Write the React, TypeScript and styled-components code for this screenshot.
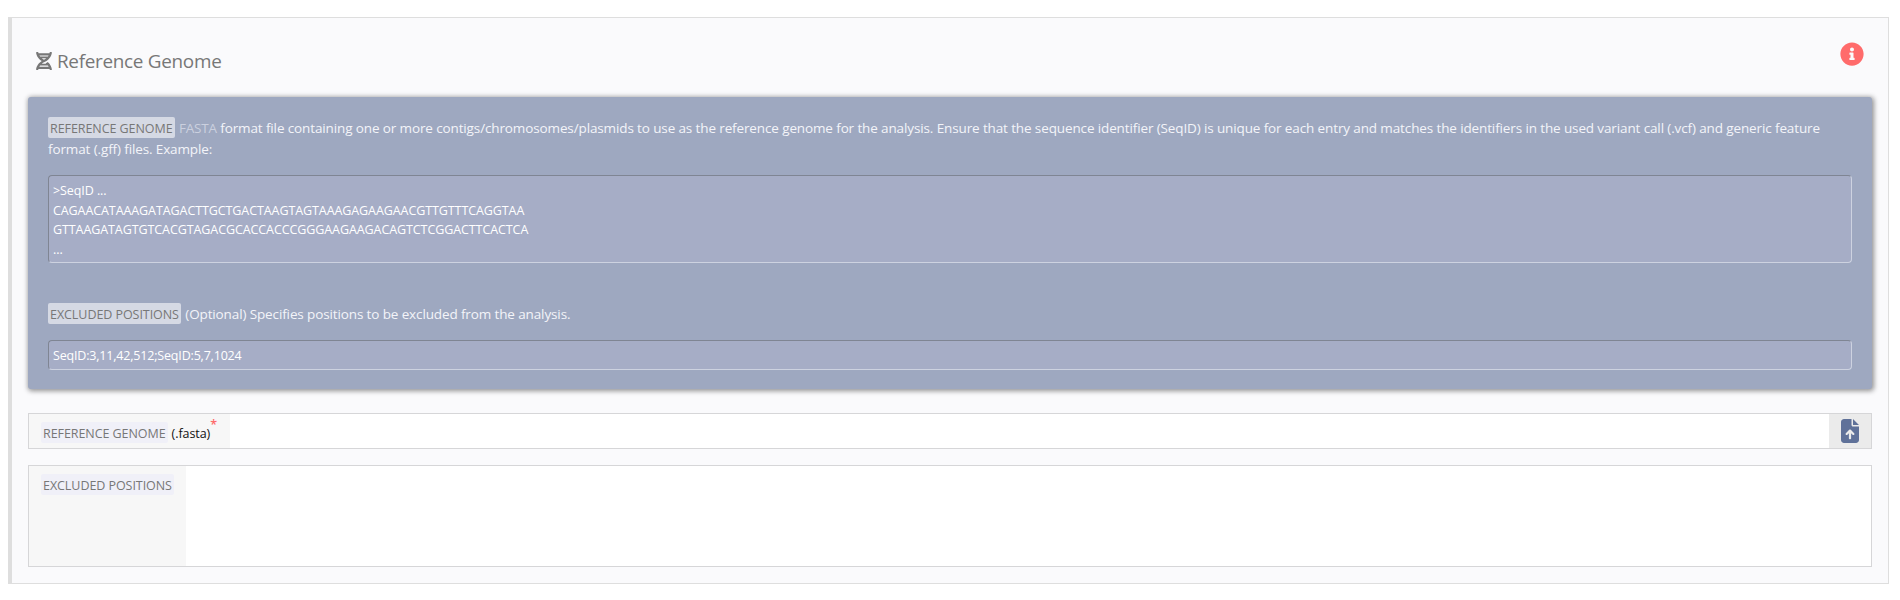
import React from 'react';
import styled, { createGlobalStyle } from 'styled-components';
import { FaDna, FaInfoCircle } from 'react-icons/fa';
import { FaFileArrowUp } from 'react-icons/fa6';

const GlobalStyle = createGlobalStyle`
  *, *::before, *::after { box-sizing: border-box; }
  body {
    margin: 0;
    background: #fff;
    font-family: 'Open Sans', 'Noto Sans', sans-serif;
  }
`;

const Card = styled.section`
  display: flex;
  flex-direction: column;
  height: 567px;
  margin: 17px 11px 0 8px;
  padding: 0 16px 16px;
  border: 1px solid #dedede;
  border-left-width: 4px;
  background: #fafafc;
`;

const Header = styled.header`
  display: flex;
  justify-content: space-between;
  height: 79px;
  padding: 24px 8px 0;
`;

const Title = styled.h1`
  display: flex;
  align-items: center;
  gap: 5px;
  height: 38px;
  margin: 0;
  font-size: 18.9px;
  font-weight: 400;
  line-height: 38px;
  letter-spacing: -0.29px;
  color: #777;
  white-space: nowrap;
`;

const DnaIcon = styled(FaDna)`
  width: 16px;
  height: 18px;
`;

const InfoButton = styled.button`
  width: 24px;
  height: 24px;
  padding: 0;
  border: 0;
  background: none;
  color: #ff6b6b;
  svg { display: block; width: 24px; height: 24px; }
`;

const HelpPanel = styled.div`
  height: 292px;
  padding: 20px;
  border-radius: 3px;
  background: #9ea8c0;
  box-shadow: 1px 1px 5px 1px rgba(0, 0, 0, 0.42);
`;

const HelpText = styled.p<{ $tall?: boolean }>`
  margin: 0;
  height: ${(p) => (p.$tall ? '58px' : '37px')};
  padding-top: 1px;
  font-size: 13.5px;
  line-height: 21px;
  letter-spacing: -0.123px;
  color: #f3f4f9;
`;

const Tag = styled.span<{ $onPanel?: boolean }>`
  display: inline-block;
  height: 21px;
  margin: ${(p) => (p.$onPanel ? '-1px 1px 0 0' : '0')};
  padding: 0 2px;
  border-radius: 2px;
  font-size: 12.5px;
  line-height: 24px;
  letter-spacing: -0.06px;
  vertical-align: top;
  white-space: nowrap;
  color: #777;
  background: ${(p) => (p.$onPanel ? '#d5d9e4' : '#f0f0f8')};
`;

const Format = styled.span`
  letter-spacing: -0.2px;
  color: #cbd0df;
`;

const Example = styled.pre<{ $spacing: number }>`
  margin: 0;
  padding: 5px 4px 3px;
  border: 1px solid;
  border-color: #7f8593 #cdd2e0 #cdd2e0 #7f8593;
  border-radius: 4px;
  background: #a6adc6;
  color: #fff;
  font-family: inherit;
  font-size: 12.5px;
  line-height: 19.5px;
  letter-spacing: ${(p) => p.$spacing}px;
`;

const Entry = styled.div`
  & + & { margin-top: 40px; }
`;

const Field = styled.div<{ $height: number; $gap: number }>`
  display: flex;
  flex: none;
  height: ${(p) => p.$height}px;
  margin-top: ${(p) => p.$gap}px;
  border: 1px solid #d6d6d8;
  background: #fff;
`;

const FieldLabel = styled.label<{ $width: number }>`
  flex: none;
  display: flex;
  align-items: flex-start;
  width: ${(p) => p.$width}px;
  padding: 8px 0 0 12px;
  background: #f7f7f7;
`;

const Extension = styled.span`
  margin-left: 4px;
  font-size: 12.5px;
  line-height: 24px;
  letter-spacing: -0.08px;
  color: #111;
`;

const Required = styled.span`
  margin: -6px 0 0 0;
  font-size: 12.5px;
  font-weight: 600;
  line-height: 18px;
  color: #ff6b6b;
`;

const TextInput = styled.input`
  flex: 1;
  min-width: 0;
  padding: 0 8px;
  border: 0;
  outline: 0;
  background: #fff;
`;

const TextArea = styled.textarea`
  flex: 1;
  padding: 8px;
  border: 0;
  outline: 0;
  resize: none;
  background: #fff;
`;

const UploadButton = styled.button`
  display: flex;
  align-items: center;
  justify-content: center;
  width: 42px;
  padding: 0;
  border: 0;
  background: #ebebeb;
  color: #5f7199;
  svg { width: 18px; height: 24px; }
`;

const SEQUENCE = `>SeqID ...
CAGAACATAAAGATAGACTTGCTGACTAAGTAGTAAAGAGAAGAACGTTGTTTCAGGTAA
GTTAAGATAGTGTCACGTAGACGCACCACCCGGGAAGAAGACAGTCTCGGACTTCACTCA
...`;

export default function App() {
  return (
    <>
      <GlobalStyle />
      <Card>
        <Header>
          <Title>
            <DnaIcon />
            Reference Genome
          </Title>
          <InfoButton aria-label="Information">
            <FaInfoCircle />
          </InfoButton>
        </Header>

        <HelpPanel>
          <Entry>
            <HelpText $tall>
              <Tag $onPanel>REFERENCE GENOME</Tag> <Format>FASTA</Format> format file containing one or more
              contigs/chromosomes/plasmids to use as the reference genome for the analysis. Ensure that the sequence
              identifier (SeqID) is unique for each entry and matches the identifiers in the used variant call (.vcf)
              and generic feature format (.gff) files. Example:
            </HelpText>
            <Example $spacing={-0.085}>{SEQUENCE}</Example>
          </Entry>
          <Entry>
            <HelpText>
              <Tag $onPanel>EXCLUDED POSITIONS</Tag> (Optional) Specifies positions to be excluded from the analysis.
            </HelpText>
            <Example $spacing={-0.178}>SeqID:3,11,42,512;SeqID:5,7,1024</Example>
          </Entry>
        </HelpPanel>

        <Field $height={36} $gap={24}>
          <FieldLabel $width={201} htmlFor="genome">
            <Tag>REFERENCE GENOME</Tag>
            <Extension>(.fasta)</Extension>
            <Required>*</Required>
          </FieldLabel>
          <TextInput id="genome" />
          <UploadButton aria-label="Upload file">
            <FaFileArrowUp />
          </UploadButton>
        </Field>

        <Field $height={102} $gap={16}>
          <FieldLabel $width={157} htmlFor="excluded">
            <Tag>EXCLUDED POSITIONS</Tag>
          </FieldLabel>
          <TextArea id="excluded" />
        </Field>
      </Card>
    </>
  );
}
